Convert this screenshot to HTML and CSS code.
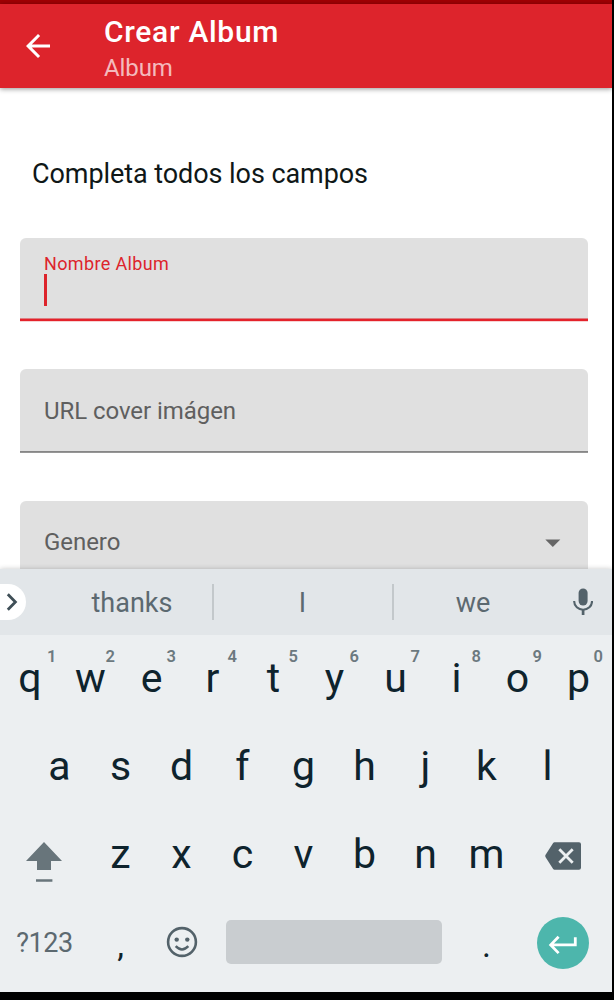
FILE: index.html
```html
<!DOCTYPE html>
<html lang="es">
<head>
<meta charset="utf-8">
<title>Crear Album</title>
<link rel="stylesheet" href="styles.css">
</head>
<body>
<div class="screen">
  <div class="status"></div>
  <header class="bar">
    <svg class="back" width="36" height="36" viewBox="0 0 24 24"><path fill="#fff" d="M20 11H7.83l5.59-5.59L12 4l-8 8 8 8 1.41-1.41L7.83 13H20z"/></svg>
    <div class="titles">
      <h1 class="title">Crear Album</h1>
      <div class="subtitle">Album</div>
    </div>
  </header>
  <main class="form">
    <h2 class="heading">Completa todos los campos</h2>
    <div class="field focused">
      <label class="float">Nombre Album</label>
      <div class="caret"></div>
    </div>
    <div class="field plain"><label>URL cover imágen</label></div>
    <div class="field plain select"><label>Genero</label>
      <svg width="16" height="8" viewBox="0 0 16 8"><path fill="#666" d="M.3.4h15L7.8 7.9z"/></svg>
    </div>
  </main>
  <section class="keyboard">
    <div class="suggest">
      <div class="chip"><svg width="14" height="20" viewBox="0 0 14 20"><path fill="none" stroke="#3f4f57" stroke-width="2.8" d="M2.8 2.2 10.4 10 2.8 17.8"/></svg></div>
      <span class="word">thanks</span><span class="word mid">I</span><span class="word last">we</span>
      <svg class="mic" width="20" height="27" viewBox="0 0 20 27"><rect x="5.6" y=".5" width="9" height="17" rx="4.5" fill="#53626a"/><path fill="none" stroke="#53626a" stroke-width="2.1" d="M1.2 13v.5a8.9 8.2 0 0 0 17.8 0V13"/><path stroke="#53626a" stroke-width="2.7" d="M10.1 21v6"/></svg>
    </div>
    <div class="row top">
      <kbd>q<sup>1</sup></kbd><kbd>w<sup>2</sup></kbd><kbd>e<sup>3</sup></kbd><kbd>r<sup>4</sup></kbd><kbd>t<sup>5</sup></kbd><kbd>y<sup>6</sup></kbd><kbd>u<sup>7</sup></kbd><kbd>i<sup>8</sup></kbd><kbd>o<sup>9</sup></kbd><kbd>p<sup>0</sup></kbd>
    </div>
    <div class="row home">
      <kbd>a</kbd><kbd>s</kbd><kbd>d</kbd><kbd>f</kbd><kbd>g</kbd><kbd>h</kbd><kbd>j</kbd><kbd>k</kbd><kbd>l</kbd>
    </div>
    <div class="row lower">
      <div class="key shift"><svg width="36" height="41" viewBox="0 0 36 41"><path fill="#68757b" d="M18 0 36 19H25v9H11v-9H0zM10 37.2h16.4v2.6H10z"/></svg></div>
      <kbd>z</kbd><kbd>x</kbd><kbd>c</kbd><kbd>v</kbd><kbd>b</kbd><kbd>n</kbd><kbd>m</kbd>
      <div class="key"><svg class="del" width="36" height="28" viewBox="0 0 36 28"><path fill="#53626a" d="M9.5.3H34a2 2 0 0 1 2 2v23.4a2 2 0 0 1-2 2H9.5q-.9 0-1.5-.9L.6 15.2q-.7-1.2 0-2.4L8 1.2Q8.6.3 9.5.3"/><path stroke="#eceff1" stroke-width="2.8" d="m14.3 7.3 13.4 13.4m0-13.4L14.3 20.7"/></svg></div>
    </div>
    <div class="row bottom">
      <div class="key sym">?123</div>
      <kbd>,</kbd>
      <div class="key"><svg class="smile" width="32" height="32" viewBox="0 0 32 32"><circle cx="16" cy="16" r="13.9" fill="none" stroke="#53626a" stroke-width="2.6"/><circle cx="10.7" cy="13.6" r="2.2" fill="#53626a"/><circle cx="21.3" cy="13.6" r="2.2" fill="#53626a"/><path fill="none" stroke="#53626a" stroke-width="2.5" d="M9.7 20.2q6.3 6.6 12.6 0"/></svg></div>
      <div class="space"></div>
      <kbd>.</kbd>
      <div class="key"><div class="enter"><svg width="30" height="20" viewBox="0 0 30 20"><path fill="none" stroke="#fff" stroke-width="2.8" d="M10.6 1.7 2.7 9.9l7.9 8.2M3 9.9h24.3V2.3"/></svg></div></div>
    </div>
  </section>
</div>
</body>
</html>
```

FILE: styles.css
```css
* { box-sizing: border-box; }
body { margin: 0; background: #000; font-family: Roboto, "Noto Sans", sans-serif; }
.screen { width: 612px; height: 992px; background: #fff; display: flex; flex-direction: column; overflow: hidden; }
.status { height: 4px; background: #a00004; flex: none; }
.bar { height: 84px; flex: none; background: #dd242c; display: flex; align-items: center; padding-left: 20px; gap: 48px; box-shadow: 0 1px 5px rgba(0,0,0,.42); color: #fff; }
.back { display: block; }
.titles { display: flex; flex-direction: column; padding-top: 7px; }
.title { margin: 0; font-size: 30px; font-weight: 500; line-height: 36px; letter-spacing: .7px; }
.subtitle { font-size: 24px; line-height: 36px; letter-spacing: -.1px; color: rgba(255,255,255,.7); }

.form { flex: 1; min-height: 0; padding: 65px 24px 0 20px; overflow: hidden; }
.heading { margin: 0 0 45px 12px; padding-top: 1px; height: 40px; font-size: 27px; font-weight: 400; line-height: 40px; letter-spacing: -.07px; color: #0f1717; }
.field { height: 84px; background: #e0e0e0; border-radius: 6px 6px 0 0; padding: 0 24px; margin-bottom: 47px; display: flex; align-items: center; font-size: 24px; letter-spacing: -.06px; color: #5f5f5f; }
.focused { flex-direction: column; align-items: flex-start; padding-top: 14px; background: linear-gradient(#dd8084 0 1px, #e4222b 1px 3px, #f7d3d4 3px) 0 100% / 100% 4px no-repeat, #e0e0e0; }
.float { font-size: 18px; line-height: 23px; height: 22px; color: #dd242c; letter-spacing: .35px; }
.caret { width: 3px; height: 32px; background: #dd242c; }
.plain { background: linear-gradient(#868686 0 1px, #969696 1px) 0 100% / 100% 2px no-repeat, #e0e0e0; }
.select { justify-content: space-between; margin-top: 48px; padding-right: 27px; margin-bottom: 0; }
.select label { padding-bottom: 2px; }

.keyboard { position: relative; height: 423px; flex: none; background: #eceff1; box-shadow: 0 0 5px rgba(0,0,0,.22); color: #0e232d; }
.suggest { height: 66px; background: #e2e6e9; display: flex; align-items: center; color: #5c6970; font-size: 27px; }
.chip { width: 26px; height: 36px; margin-right: 26px; background: #fff; border-radius: 0 18px 18px 0; display: flex; align-items: center; padding-left: 4.5px; }
.word { width: 160px; height: 36px; line-height: 39px; text-align: center; }
.mid { width: 182px; border: solid #c3c8cb; border-width: 0 2px; padding-right: 1px; }
.last { padding-right: 2px; }
.mic { margin: 0 0 1px 18.5px; }
.row { height: 88px; display: grid; grid-template-rows: 88px; }
.top { grid-template-columns: 60px repeat(9, 61px); }
.home { grid-template-columns: repeat(9, 61px); padding-left: 29px; }
.lower { grid-template-columns: 90px repeat(7, 61px) 75px; }
.bottom { grid-template-columns: 90px 61px 61px 244px 61px 89px; }
kbd { position: relative; font: 400 41px/86px Roboto, sans-serif; text-align: center; }
sup { position: absolute; top: 12px; left: 45.5px; font-size: 16.5px; line-height: 20px; font-weight: 600; color: #6c797f; }
kbd:first-child sup { left: 47px; }
.key { display: flex; align-items: center; justify-content: center; }
.shift { padding: 15px 2px 0 0; }
.del { margin: 2px 0 0 16px; }
.sym { font-size: 27px; letter-spacing: -.4px; color: #5c6970; padding: 0 1px 0 0; }
.bottom kbd { font-size: 34px; line-height: 92px; }
.smile { margin: 0 0 3px; }
.space { width: 216px; height: 44px; margin: 21px 0 0 14px; border-radius: 5px; background: #c9cdd0; }
.enter { width: 52px; height: 52px; border-radius: 50%; background: #4db6ac; display: flex; align-items: center; justify-content: center; padding-top: 3px; margin: 0 0 0 3px; }
```
